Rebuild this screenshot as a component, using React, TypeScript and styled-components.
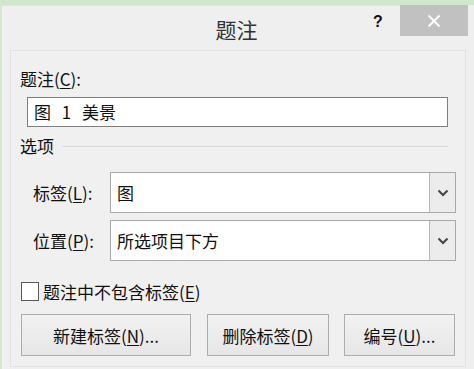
import React from "react";
import styled, { createGlobalStyle } from "styled-components";

const GlobalStyle = createGlobalStyle`
  html, body {
    margin: 0;
    padding: 0;
    background: #f0f0f0;
  }
  * {
    box-sizing: border-box;
  }
`;

const FONT = `"Microsoft YaHei", "Noto Sans CJK SC", "Noto Sans", sans-serif`;

const Frame = styled.div`
  width: 474px;
  height: 369px;
  display: flex;
  flex-direction: column;
  background: #efefef;
  border-top: 5px solid #cfe7cb;
  border-left: 2px solid #d4eacf;
  padding-right: 6px;
  font-family: ${FONT};
  color: #111;
  overflow: hidden;
`;

const TitleBar = styled.div`
  height: 45px;
  flex: none;
  display: grid;
  grid-template-columns: 1fr auto 1fr;
  align-items: start;
  border-top: 1px solid #e2e2e2;
`;

const Title = styled.div`
  grid-column: 2;
  padding-top: 9px;
  font-size: 21px;
  line-height: 28px;
  color: #333;
  padding-left: 3px;
`;

const TitleButtons = styled.div`
  grid-column: 3;
  justify-self: end;
  display: flex;
  align-items: flex-start;
`;

const HelpButton = styled.div`
  width: 32px;
  height: 30px;
  display: flex;
  align-items: center;
  justify-content: center;
  font-family: "Liberation Sans", Arial, sans-serif;
  font-weight: bold;
  font-size: 16px;
  color: #111;
  padding-top: 1px;
  margin-right: 6px;
`;

const CloseButton = styled.div`
  width: 68px;
  height: 31px;
  margin-top: -1px;
  background: #c1c1c1;
  display: flex;
  align-items: center;
  justify-content: center;
`;

const Panel = styled.div`
  flex: 1;
  margin: 0 2px 2px 8px;
  border: 1px solid #e2e2e2;
  background: #f0f0f0;
  padding: 0 9px;
  display: flex;
  flex-direction: column;
`;

const FieldLabel = styled.div`
  margin-top: 16px;
  font-size: 17px;
  line-height: 24px;
`;

const Key = styled.span`
  text-decoration: underline;
  text-underline-offset: 2px;
`;

const TextBox = styled.div`
  margin: 6px 8px 0 7px;
  height: 30px;
  border: 1px solid #7f7f7f;
  background: #fff;
  font-size: 17px;
  line-height: 28px;
  padding-left: 6px;
  word-spacing: 7px;
  white-space: pre;
`;

const GroupHeader = styled.div`
  margin-top: 9px;
  height: 20px;
  display: flex;
  align-items: center;
  gap: 8px;
  font-size: 17px;
  line-height: 20px;
`;

const GroupLine = styled.div`
  flex: 1;
  height: 1px;
  background: #dcdcdc;
  margin-right: 8px;
`;

const ComboRow = styled.div<{ $top: number }>`
  margin-top: ${(p) => p.$top}px;
  display: grid;
  grid-template-columns: 90px 1fr;
  align-items: center;
`;

const ComboLabel = styled.div`
  padding-left: 13px;
  font-size: 17px;
  line-height: 24px;
`;

const Combo = styled.div`
  height: 41px;
  display: flex;
  border: 1px solid #a9a9a9;
  background: #fff;
`;

const ComboValue = styled.div`
  flex: 1;
  font-size: 17px;
  line-height: 39px;
  padding-left: 6px;
`;

const ComboArrow = styled.div`
  width: 26px;
  border-left: 1px solid #b4b4b4;
  background: #ececec;
  display: flex;
  align-items: center;
  justify-content: center;
`;

const CheckRow = styled.label`
  margin-top: 21px;
  height: 19px;
  display: flex;
  align-items: center;
  gap: 4px;
  padding-left: 1px;
  font-size: 17px;
`;

const CheckBox = styled.span`
  width: 18px;
  height: 19px;
  border: 1px solid #5a5a5a;
  background: #fff;
`;

const ButtonRow = styled.div`
  margin-top: 13px;
  display: flex;
  padding-left: 1px;
`;

const Button = styled.div<{ $w: number; $gap: number }>`
  width: ${(p) => p.$w}px;
  margin-left: ${(p) => p.$gap}px;
  height: 42px;
  border: 1px solid #adadad;
  background: linear-gradient(#f2f2f2, #e6e6e6);
  display: flex;
  align-items: center;
  justify-content: center;
  font-size: 17px;
`;

const Chevron = () => (
  <svg width="12" height="8" viewBox="0 0 12 8">
    <path d="M1.5 1.5 L6 6 L10.5 1.5" fill="none" stroke="#444" strokeWidth="2" />
  </svg>
);

export default function App() {
  return (
    <>
      <GlobalStyle />
      <Frame>
        <TitleBar>
          <Title>题注</Title>
          <TitleButtons>
            <HelpButton>?</HelpButton>
            <CloseButton>
              <svg width="14" height="14" viewBox="0 0 14 14">
                <path d="M1.5 1.5 L12.5 12.5 M12.5 1.5 L1.5 12.5" stroke="#fff" strokeWidth="1.8" />
              </svg>
            </CloseButton>
          </TitleButtons>
        </TitleBar>
        <Panel>
          <FieldLabel>
            题注(<Key>C</Key>):
          </FieldLabel>
          <TextBox>图 1 美景</TextBox>
          <GroupHeader>
            选项
            <GroupLine />
          </GroupHeader>
          <ComboRow $top={16}>
            <ComboLabel>
              标签(<Key>L</Key>):
            </ComboLabel>
            <Combo>
              <ComboValue>图</ComboValue>
              <ComboArrow>
                <Chevron />
              </ComboArrow>
            </Combo>
          </ComboRow>
          <ComboRow $top={7}>
            <ComboLabel>
              位置(<Key>P</Key>):
            </ComboLabel>
            <Combo>
              <ComboValue>所选项目下方</ComboValue>
              <ComboArrow>
                <Chevron />
              </ComboArrow>
            </Combo>
          </ComboRow>
          <CheckRow>
            <CheckBox />
            <span>
              题注中不包含标签(<Key>E</Key>)
            </span>
          </CheckRow>
          <ButtonRow>
            <Button $w={170} $gap={0}>
              <span>
                新建标签(<Key>N</Key>)...
              </span>
            </Button>
            <Button $w={122} $gap={16}>
              <span>
                删除标签(<Key>D</Key>)
              </span>
            </Button>
            <Button $w={111} $gap={15}>
              <span>
                编号(<Key>U</Key>)...
              </span>
            </Button>
          </ButtonRow>
        </Panel>
      </Frame>
    </>
  );
}
